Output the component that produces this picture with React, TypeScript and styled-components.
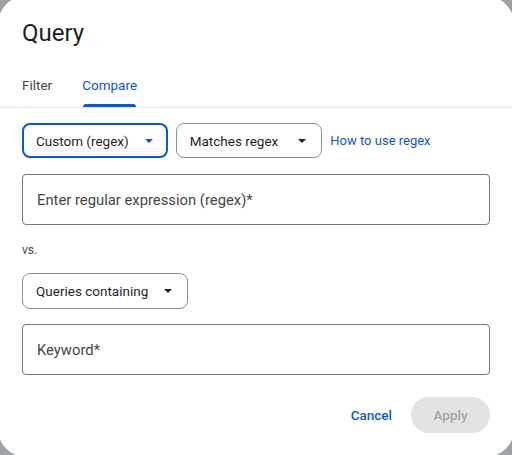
import React from "react";
import styled, { createGlobalStyle } from "styled-components";

const Global = createGlobalStyle`
  html, body { margin: 0; padding: 0; }
  body {
    background: #9ea2a7;
    width: 512px;
    height: 455px;
    overflow: hidden;
    position: relative;
    font-family: Roboto, "Noto Sans", Arial, sans-serif;
  }
`;

const Dialog = styled.div`
  position: absolute;
  left: -2px;
  top: -4px;
  width: 516px;
  height: 461px;
  background: #ffffff;
  border-radius: 28px;
  display: flex;
  flex-direction: column;
  box-sizing: border-box;
`;

const Title = styled.h1`
  margin: 0;
  padding: 21px 24px 0;
  font-family: Roboto, sans-serif;
  font-weight: 400;
  font-size: 24px;
  line-height: 32px;
  color: #1f1f1f;
`;

const TabBar = styled.div`
  margin-top: 14px;
  display: flex;
  gap: 30px;
  padding: 0 24px;
  border-bottom: 1px solid #e3e3e3;
`;

const Tab = styled.div<{ $active?: boolean }>`
  position: relative;
  height: 44px;
  display: flex;
  align-items: center;
  font-size: 13.5px;
  font-weight: 400;
  color: ${(p) => (p.$active ? "#0b57d0" : "#444746")};
  &::after {
    content: "";
    display: ${(p) => (p.$active ? "block" : "none")};
    position: absolute;
    left: 1px;
    right: 1px;
    bottom: 0;
    height: 3px;
    border-radius: 3px 3px 0 0;
    background: #0b57d0;
  }
`;

const Body = styled.div`
  padding: 15px 24px 0;
  display: flex;
  flex-direction: column;
`;

const Row = styled.div`
  display: flex;
  align-items: center;
  gap: 8px;
`;

const Select = styled.div<{ $focused?: boolean; $tall?: boolean; $gap?: number }>`
  box-sizing: border-box;
  height: ${(p) => (p.$tall ? "36px" : "35px")};
  display: flex;
  align-items: center;
  gap: ${(p) => p.$gap ?? 16}px;
  padding: 0 ${(p) => (p.$focused ? "13px" : "15px")} 0 ${(p) => (p.$focused ? "12px" : "13px")};
  border: ${(p) => (p.$focused ? "2px solid #0b57d0" : "1px solid #8e918f")};
  border-radius: 8px;
  font-size: 13.5px;
  color: #1f1f1f;
`;

const Arrow = styled.svg<{ $focused?: boolean }>`
  width: 8px;
  height: 4px;
  fill: ${(p) => (p.$focused ? "#0b57d0" : "#1f1f1f")};
`;

const Link = styled.a`
  font-size: 13px;
  color: #0b57d0;
  text-decoration: none;
`;

const Field = styled.div<{ $top: number }>`
  box-sizing: border-box;
  margin-top: ${(p) => p.$top}px;
  height: 51px;
  border: 1px solid #747775;
  border-radius: 4px;
  display: flex;
  align-items: center;
  padding: 0 14px;
  font-size: 14.8px;
  color: #444746;
`;

const Vs = styled.div`
  margin-top: 17px;
  font-size: 12px;
  color: #444746;
  line-height: 16px;
`;

const SelectRow = styled.div`
  margin-top: 15px;
  display: flex;
`;

const Actions = styled.div`
  margin-top: auto;
  padding: 0 24px 24px;
  display: flex;
  justify-content: flex-end;
  align-items: center;
  gap: 19px;
`;

const TextButton = styled.button`
  border: none;
  background: none;
  padding: 0;
  font-family: inherit;
  font-size: 13.5px;
  font-weight: 500;
  color: #0b57d0;
`;

const FilledButton = styled.button`
  border: none;
  height: 36px;
  width: 79px;
  border-radius: 18px;
  background: #e3e3e3;
  font-family: inherit;
  font-size: 13.5px;
  font-weight: 500;
  color: #a6a6a6;
`;

const Caret = ({ focused }: { focused?: boolean }) => (
  <Arrow $focused={focused} viewBox="0 0 8 4">
    <path d="M0 0 L8 0 L4 4 Z" />
  </Arrow>
);

export default function App() {
  return (
    <>
      <Global />
      <Dialog>
        <Title>Query</Title>
        <TabBar>
          <Tab>Filter</Tab>
          <Tab $active>Compare</Tab>
        </TabBar>
        <Body>
          <Row>
            <Select $focused>
              Custom (regex)
              <Caret focused />
            </Select>
            <Select $gap={20}>
              Matches regex
              <Caret />
            </Select>
            <Link href="#">How to use regex</Link>
          </Row>
          <Field $top={16}>Enter regular expression (regex)*</Field>
          <Vs>vs.</Vs>
          <SelectRow>
            <Select $tall>
              Queries containing
              <Caret />
            </Select>
          </SelectRow>
          <Field $top={15}>Keyword*</Field>
        </Body>
        <Actions>
          <TextButton>Cancel</TextButton>
          <FilledButton disabled>Apply</FilledButton>
        </Actions>
      </Dialog>
    </>
  );
}
